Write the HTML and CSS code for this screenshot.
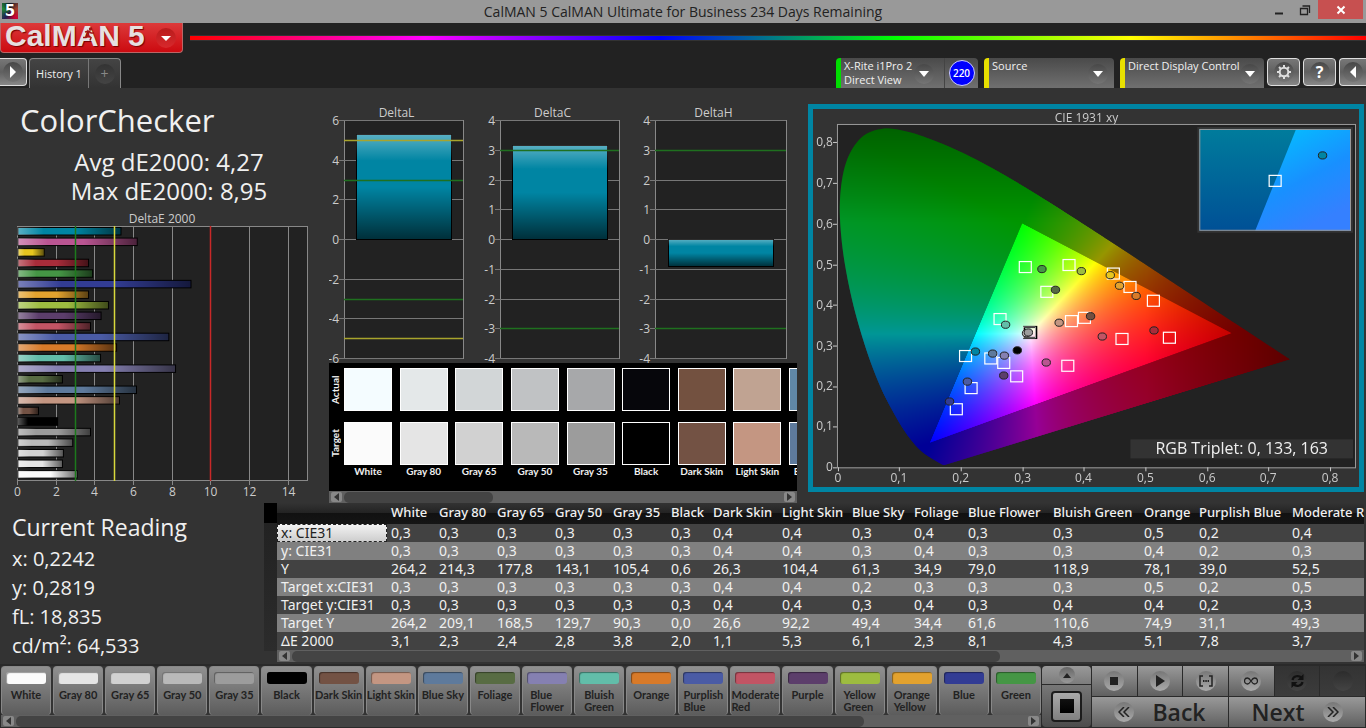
FILE: index.html
```html
<!DOCTYPE html>
<html lang="en">
<head>
    <meta charset="UTF-8">
    <meta name="viewport" content="width=device-width, initial-scale=1.0">
    <title>CalMAN 5 CalMAN Ultimate for Business</title>
    <link rel="stylesheet" href="styles.css">
</head>
<body>
    <div class="titlebar">
        <span class="app-icon">5</span>
        <span class="window-title">CalMAN 5 CalMAN Ultimate for Business 234 Days Remaining</span>
        <div class="window-buttons">
            <button class="win-btn" aria-label="Minimize"><svg width="12" height="14"><path d="M2 10.5h8" stroke="#222" stroke-width="2"/></svg></button>
            <button class="win-btn" aria-label="Restore"><svg width="12" height="14"><path d="M1.5 5.500h7v6h-7zM3.500 3h7v7" fill="none" stroke="#222" stroke-width="1.300"/></svg></button>
            <button class="win-btn close" aria-label="Close"><svg width="10" height="10"><path d="M1.500 1.500l7 7M8.500 1.500l-7 7" stroke="#fff" stroke-width="2"/></svg></button>
        </div>
    </div>

    <header>
        <div class="brand-row">
            <button class="brand" aria-label="CalMAN 5 menu">
                <span class="brand-name">CalMAN</span>
                <span class="brand-name">5</span>
                <svg class="runner" width="12" height="14" viewBox="0 0 12 14"><circle cx="7.500" cy="2" r="1.700" fill="#a01515"/><path d="M2 5l4-1 2 2 3 0M6 4.500l-1 4 3 2-1 3M5 8.500l-2 2-3 0" fill="none" stroke="#a01515" stroke-width="1.500"/></svg>
                <span class="knob red"><svg width="10" height="5"><path d="M0 0h10l-5 5z" fill="#fff"/></svg></span>
            </button>
            <div class="spectrum"></div>
        </div>
        <div class="tab-row">
            <button class="square-btn first" aria-label="Expand"><span class="knob"><svg width="6" height="12"><path d="M0 0l6 6-6 6z" fill="#fff"/></svg></span></button>
            <div class="tabs">
                <button class="tab">History 1</button>
                <button class="tab add" aria-label="Add tab"><span class="knob dim">+</span></button>
            </div>
            <div class="devices">
                <button class="device meter">
                    <span class="device-name">X-Rite i1Pro 2<br>Direct View</span>
                    <span class="knob"><svg width="10" height="6"><path d="M0 0h10l-5 6z" fill="#fff"/></svg></span>
                </button>
                <button class="count"><span class="badge">220</span></button>
                <button class="device source">
                    <span class="device-name">Source</span>
                    <span class="knob"><svg width="10" height="6"><path d="M0 0h10l-5 6z" fill="#fff"/></svg></span>
                </button>
                <button class="device display">
                    <span class="device-name">Direct Display Control</span>
                    <span class="knob"><svg width="10" height="6"><path d="M0 0h10l-5 6z" fill="#fff"/></svg></span>
                </button>
                <button class="square-btn" aria-label="Settings"><span class="knob"><svg width="16" height="16" viewBox="0 0 16 16"><circle cx="8" cy="8" r="4.300" fill="none" stroke="#ddd" stroke-width="2"/><path d="M8 1v2.500M8 12.500V15M1 8h2.500M12.500 8H15M3 3l1.800 1.800M11.200 11.200L13 13M3 13l1.800-1.800M11.200 4.800L13 3" stroke="#ddd" stroke-width="2"/></svg></span></button>
                <button class="square-btn" aria-label="Help"><span class="knob help">?</span></button>
                <button class="square-btn last" aria-label="Collapse"><span class="knob"><svg width="6" height="12"><path d="M6 0L0 6l6 6z" fill="#fff"/></svg></span></button>
            </div>
        </div>
    </header>

    <main>
        <div class="charts">
            <section class="summary">
                <h1>ColorChecker</h1>
                <p class="stats">Avg dE2000: 4,27<br>Max dE2000: 8,95</p>
                <svg id="deltaE" class="chart" viewBox="0 0 329 290"></svg>
            </section>

            <section class="deltas">
                <svg id="deltaLCH" class="chart" viewBox="0 0 468 275"></svg>
                <div class="compare">
                    <div class="compare-labels"><span>Actual</span><span>Target</span></div>
                    <div class="compare-track" id="compare"></div>
                </div>
                <div class="scroll">
                    <button class="scroll-btn" aria-label="Scroll left"><svg width="5" height="8"><path d="M5 0v8L0 4z"/></svg></button>
                    <div class="scroll-track"><div class="scroll-thumb" style="width: 34%"></div></div>
                    <button class="scroll-btn" aria-label="Scroll right"><svg width="5" height="8"><path d="M0 0v8l5-4z"/></svg></button>
                </div>
            </section>

            <section class="cie">
                <canvas id="gamut" width="1094" height="758"></canvas>
                <svg id="ciePlot" viewBox="0 0 547 379"></svg>
            </section>
        </div>

        <div class="readings">
            <section class="current">
                <h2>Current Reading</h2>
                <p>x: 0,2242<br>y: 0,2819<br>fL: 18,835<br>cd/m²: 64,533</p>
            </section>
            <section class="data">
                <div class="row-marks"></div>
                <div class="data-body">
                    <div class="table-wrap"><table id="data"></table></div>
                    <div class="scroll">
                        <button class="scroll-btn" aria-label="Scroll left"><svg width="5" height="8"><path d="M5 0v8L0 4z"/></svg></button>
                        <div class="scroll-track"><div class="scroll-thumb" style="width: 67%"></div></div>
                        <button class="scroll-btn" aria-label="Scroll right"><svg width="5" height="8"><path d="M0 0v8l5-4z"/></svg></button>
                    </div>
                </div>
            </section>
        </div>
    </main>

    <footer>
        <div class="patches">
            <div class="patch-row" id="patches"></div>
            <div class="scroll">
                <button class="scroll-btn" aria-label="Scroll left"><svg width="5" height="8"><path d="M5 0v8L0 4z"/></svg></button>
                <div class="scroll-track"><div class="scroll-thumb" style="width: 84%"></div></div>
                <button class="scroll-btn" aria-label="Scroll right"><svg width="5" height="8"><path d="M0 0v8l5-4z"/></svg></button>
            </div>
        </div>
        <div class="pattern">
            <button class="pattern-up" aria-label="Expand patterns"><span class="knob small"><svg width="8" height="5"><path d="M0 5h8L4 0z" fill="#222"/></svg></span></button>
            <button class="pattern-view" aria-label="Pattern window"><span class="pattern-box"></span></button>
        </div>
        <div class="transport">
            <div class="play-row">
                <button aria-label="Stop"><span class="knob light"><svg width="8" height="8"><path d="M0 0h8v8H0z" fill="#222"/></svg></span></button>
                <button aria-label="Play"><span class="knob light"><svg width="9" height="12"><path d="M0 0l9 6-9 6z" fill="#222"/></svg></span></button>
                <button aria-label="Read series"><span class="knob light"><svg width="14" height="12"><path d="M4 1H1v10h3M10 1h3v10h-3" fill="none" stroke="#222" stroke-width="1.500"/><path d="M4 6h6" stroke="#222" stroke-width="2" stroke-dasharray="1.500 .8"/></svg></span></button>
                <button aria-label="Read continuous"><span class="knob light"><svg width="14" height="8"><path d="M7 4C5 1 4 1 3.500 1a3 3 0 0 0 0 6C4 7 5 7 7 4s3-3 3.500-3a3 3 0 0 1 0 6C10 7 9 7 7 4" fill="none" stroke="#222" stroke-width="1.300"/></svg></span></button>
                <button class="off" aria-label="Repeat"><span class="knob off"><svg width="13" height="14" viewBox="0 0 13 14"><path d="M1.500 6a5 4.500 0 0 1 9-2M11.500 8a5 4.500 0 0 1-9 2" fill="none" stroke="#111" stroke-width="2.200"/><path d="M12.500 0v6h-6zM.5 14V8h6z" fill="#111"/></svg></span></button>
                <button class="off" aria-label="Record"><span class="knob off"></span></button>
            </div>
            <div class="nav-row">
                <button><span class="knob light"><svg width="12" height="10"><path d="M6 0L1 5l5 5M11 0L6 5l5 5" fill="none" stroke="#222" stroke-width="1.500"/></svg></span>Back</button>
                <button>Next<span class="knob light"><svg width="12" height="10"><path d="M1 0l5 5-5 5M6 0l5 5-5 5" fill="none" stroke="#222" stroke-width="1.500"/></svg></span></button>
            </div>
        </div>
    </footer>

    <script src="app.js"></script>
</body>
</html>
```

FILE: styles.css
```css
* {
    box-sizing: border-box;
}
body {
    margin: 0;
    background: #222;
    color: #f0f0f0;
    font-family: "Open Sans", "Noto Sans", sans-serif;
    font-size: 12px;
}
button {
    font: inherit;
    color: inherit;
    border: none;
    padding: 0;
    margin: 0;
    background: none;
    cursor: pointer;
}
h1, h2, p {
    margin: 0;
    font-weight: 400;
}
svg, canvas {
    display: block;
}

/* title bar */
.titlebar {
    display: grid;
    grid-template-columns: 1fr auto 1fr;
    height: 23px;
    background: #999;
    color: #222;
}
.app-icon {
    width: 16px;
    height: 16px;
    margin: 3px 2px;
    background: conic-gradient(#123, #a0402a, #c03, #225, #283, #123);
    color: #fff;
    font: bold 15px/16px "DejaVu Sans", sans-serif;
    text-align: center;
    text-shadow: 0 0 2px #000;
}
.window-title {
    font-size: 14px;
    line-height: 23px;
}
.window-buttons {
    display: flex;
    justify-content: flex-end;
    align-items: flex-start;
    padding-right: 3px;
}
.win-btn {
    display: flex;
    align-items: center;
    justify-content: center;
    width: 26px;
    height: 19px;
}
.win-btn.close {
    width: 45px;
    background: #c75050;
}

/* header */
.brand-row {
    display: flex;
    gap: 7px;
    height: 35px;
}
.brand {
    position: relative;
    display: flex;
    gap: 8px;
    width: 183px;
    height: 30px;
    padding: 0 6px 0 4px;
    border: 1px solid #b66;
    border-top: none;
    border-radius: 0 0 4px 4px;
    background: linear-gradient(#dc3a3a, #cc0a10);
}
.brand-name {
    font: bold 30px/26px "Liberation Sans", Arial, sans-serif;
    color: #e6e0e0;
    text-shadow: 1px 1px 1px #700;
}
.runner {
    position: absolute;
    left: 82px;
    top: 4px;
}
.brand .knob {
    margin: 5px 0 0 auto;
}
.spectrum {
    flex: 1;
    height: 6px;
    margin-top: 12px;
    border: solid #333;
    border-width: 1px 0;
    background: linear-gradient(90deg, #f00, #f0f 20%, #00f 40%, #0f0 60%, #ff0 80%, #f00);
}
.knob {
    display: flex;
    align-items: center;
    justify-content: center;
    flex: none;
    width: 20px;
    height: 20px;
    border-radius: 50%;
    background: linear-gradient(#484848, #757575);
}
.knob.red {
    background: linear-gradient(#b81c1c, #d8282c);
}
.knob.dim {
    background: linear-gradient(#333, #444);
    color: #888;
    font-size: 14px;
}
.knob.help {
    font-size: 16px;
    font-weight: 700;
    color: #fff;
}
.knob.light {
    background: linear-gradient(#777, #aaa);
}
.knob.off {
    background: linear-gradient(#2c2c2c, #444);
}
.knob.small {
    width: 16px;
    height: 16px;
    background: linear-gradient(#666, #999);
}
.tab-row {
    display: flex;
    height: 30px;
    font-size: 11px;
}
.square-btn {
    display: flex;
    align-items: center;
    justify-content: center;
    width: 33px;
    height: 28px;
    border: 1px solid #ddd;
    border-radius: 4px;
    background: linear-gradient(#777, #606060 50%, #888);
}
.square-btn.first {
    width: 27px;
    border-left: none;
    border-radius: 0 4px 4px 0;
}
.square-btn.last {
    width: 27px;
    border-right: none;
    border-radius: 4px 0 0 4px;
}
.tabs {
    display: flex;
    margin-left: 2px;
    border: 1px solid #888;
    border-bottom: none;
    border-radius: 4px 4px 0 0;
    background: linear-gradient(#444, #333);
}
.tab {
    width: 58px;
}
.tab.add {
    display: flex;
    align-items: center;
    justify-content: center;
    width: 32px;
    border-left: 1px solid #777;
}
.devices {
    display: flex;
    gap: 3px;
    margin-left: auto;
}
.device {
    display: flex;
    justify-content: space-between;
    width: 108px;
    padding: 1px 6px 0 3px;
    border-left: 5px solid #0d0;
    border-radius: 4px 0 0 0;
    background: linear-gradient(#4a4a4a, #707070);
    text-align: left;
}
.device.meter {
    padding-right: 10px;
}
.device .knob {
    margin-top: 5px;
}
.device-name {
    line-height: 14px;
    white-space: nowrap;
}
.count {
    width: 34px;
    margin-left: -3px;
    margin-right: 3px;
    border-left: 1px solid #444;
    border-radius: 0 4px 0 0;
    background: linear-gradient(#4a4a4a, #707070);
}
.badge {
    display: block;
    width: 26px;
    height: 26px;
    margin: 0 auto;
    border: 1px solid #ccf;
    border-radius: 50%;
    background: #00f;
    color: #fff;
    font-size: 10px;
    font-weight: 600;
    line-height: 24px;
}
.device.source {
    width: 130px;
    margin-right: 3px;
    border-color: #e8e000;
    border-radius: 4px 4px 0 0;
}
.device.display {
    width: 144px;
    border-color: #e8e000;
    border-radius: 4px 4px 0 0;
}

/* charts */
main {
    background: #333;
}
.charts {
    display: grid;
    grid-template-columns: 329fr 479fr 556fr;
    padding-right: 2px;
}
.deltas {
    min-width: 0;
    padding-right: 11px;
}
.summary h1 {
    padding: 12px 0 0 20px;
    font-size: 31px;
    line-height: 40px;
}
.stats {
    margin: 7px 0;
    padding-left: 9px;
    font-size: 24px;
    line-height: 29px;
    text-align: center;
}
.chart {
    width: 100%;
}
.chart text, .cie text {
    fill: #ccc;
    font-size: 12px;
}
.compare {
    display: flex;
    height: 128px;
    overflow: hidden;
    background: #000;
    font: bold 10px/13px Lato, sans-serif;
}
.compare-labels {
    display: flex;
    flex-direction: column;
    gap: 11px;
    width: 15px;
    flex: none;
    padding-top: 5px;
}
.compare-labels span {
    height: 43px;
    writing-mode: vertical-rl;
    transform: rotate(180deg);
    text-align: center;
}
.compare-track {
    display: grid;
    grid-auto-flow: column;
    grid-auto-columns: calc((100% - 8px) / 8);
    flex: 1;
    min-width: 0;
    padding-top: 5px;
}
.compare-item {
    display: flex;
    flex-direction: column;
    align-items: center;
    width: 48px;
    white-space: nowrap;
}
.compare-color {
    width: 48px;
    height: 43px;
    margin-bottom: 11px;
    border: 1px solid #fff;
}
.compare-color.target {
    margin-bottom: 0;
}
.scroll {
    display: flex;
    align-items: center;
    gap: 2px;
    height: 12px;
    padding: 0 2px;
    background: #606060;
}
.scroll-btn {
    display: flex;
    align-items: center;
    justify-content: center;
    width: 11px;
    height: 10px;
    border-radius: 2px;
    background: #888;
    fill: #333;
}
.scroll-track {
    flex: 1;
}
.scroll-thumb {
    height: 11px;
    border-radius: 5px;
    background: #444;
}
.cie {
    display: grid;
    align-self: start;
    margin-top: 16px;
    border: 5px solid #0085a3;
}
.cie canvas, .cie svg {
    grid-area: 1 / 1;
    width: 100%;
}
.cie .triplet {
    fill: #f0f0f0;
    font-size: 16px;
}

/* readings and table */
.readings {
    display: flex;
    height: 161px;
}
.current {
    width: 264px;
    flex: none;
    padding: 8px 12px 0;
}
.current h2 {
    font-size: 23px;
    font-weight: 500;
    line-height: 33px;
}
.current p {
    font-size: 20px;
    line-height: 29px;
}
.data {
    display: flex;
    flex: 1;
    min-width: 0;
    padding-right: 2px;
}
.row-marks {
    width: 13px;
    height: 148px;
    flex: none;
    background: linear-gradient(#000 20px, #222 20px, #2c2c2c);
}
.data-body {
    flex: 1;
    min-width: 0;
}
.table-wrap {
    overflow: hidden;
}
table {
    width: 1110px;
    table-layout: fixed;
    border-collapse: collapse;
    font-family: "Noto Sans", "Open Sans", sans-serif;
    font-size: 14px;
}
th, td {
    height: 18px;
    padding: 0 0 0 4px;
    font-weight: 400;
    line-height: 18px;
    text-align: left;
    white-space: nowrap;
}
thead th {
    height: 21px;
    background: linear-gradient(#333, #222 50%, #111 50%, #151515);
    font-size: 13px;
    font-weight: 500;
    vertical-align: top;
}
tbody tr {
    background: #424242;
}
tbody tr:nth-child(even) {
    background: #808080;
}
th.selected {
    background: linear-gradient(#f4f4f4, #ccc);
    color: #222;
    outline: 1px dashed #222;
    outline-offset: -1px;
}

/* bottom bar */
footer {
    display: flex;
    height: 64px;
    padding: 2px 1px 1px;
    background: #2a2a2a;
}
.patches {
    flex: 1;
    min-width: 0;
    margin-right: 1px;
}
.patch-row {
    display: grid;
    grid-template-columns: repeat(20, 1fr);
    gap: 2px;
    height: 49px;
    background: #333;
}
.patch {
    display: flex;
    flex-direction: column;
    align-items: center;
    min-width: 0;
    padding-top: 5px;
    border: 1px solid #888;
    border-bottom: none;
    border-radius: 4px;
    background: linear-gradient(#909090, #5c5c5c);
    color: #222;
    font: bold 11px/12px Lato, sans-serif;
    text-align: left;
}
.patch-color {
    width: 40px;
    height: 12px;
    flex: none;
    margin-bottom: 5px;
    border-radius: 3px;
    box-shadow: inset 1px 1px 1px rgba(0, 0, 0, 0.4);
}
.pattern {
    display: flex;
    flex-direction: column;
    gap: 1px;
    width: 49px;
    margin-right: 1px;
}
.pattern-up {
    display: flex;
    justify-content: center;
    height: 18px;
    padding-top: 1px;
    border-radius: 4px 4px 0 0;
    background: linear-gradient(#999, #7c7c7c);
}
.pattern-view {
    display: flex;
    align-items: center;
    justify-content: center;
    flex: 1;
    border-radius: 0 0 4px 4px;
    background: linear-gradient(#777, #4c4c4c);
}
.pattern-box {
    width: 31px;
    height: 31px;
    border: 2px solid #1c1c1c;
    border-radius: 4px;
    background: linear-gradient(#111, #000) center / 14px 14px no-repeat, linear-gradient(#aaa, #808080);
}
.transport {
    display: flex;
    flex-direction: column;
    gap: 1px;
    width: 273px;
}
.play-row, .nav-row {
    display: flex;
    gap: 1px;
    height: 30px;
}
.play-row button, .nav-row button {
    display: flex;
    align-items: center;
    justify-content: center;
    flex: 1;
    background: linear-gradient(#999, #606060);
    color: #222;
}
.play-row button.off {
    background: linear-gradient(#333, #3c3c3c);
}
.nav-row button {
    gap: 18px;
    font-size: 23px;
    font-weight: 600;
    line-height: 30px;
}
```

FILE: app.js
```js
const colors = [
    { name: 'White', color: '#fbfbfb', actual: '#f4fcff', de: 3.07 },
    { name: 'Gray 80', color: '#e5e5e5', actual: '#e4e8e9', de: 2.3 },
    { name: 'Gray 65', color: '#d1d1d1', actual: '#d2d6d7', de: 2.35 },
    { name: 'Gray 50', color: '#b9b9b9', actual: '#c0c2c4', de: 2.83 },
    { name: 'Gray 35', color: '#9c9c9c', actual: '#a7a8aa', de: 3.75 },
    { name: 'Black', color: '#000000', actual: '#06060b', de: 2.05 },
    { name: 'Dark Skin', color: '#735244', actual: '#735140', de: 1.06 },
    { name: 'Light Skin', color: '#c49682', actual: '#c0a392', de: 5.25 },
    { name: 'Blue Sky', color: '#5e7a9c', actual: '#6088a8', de: 6.13 },
    { name: 'Foliage', color: '#586c43', de: 2.3 },
    { name: 'Blue Flower', color: '#8580b1', de: 8.15 },
    { name: 'Bluish Green', color: '#62bda9', de: 4.27 },
    { name: 'Orange', color: '#d87a29', de: 5.1 },
    { name: 'Purplish Blue', color: '#4a5ba5', de: 7.8 },
    { name: 'Moderate Red', color: '#c25464', de: 3.75 },
    { name: 'Purple', color: '#5c3e6b', de: 4.3 },
    { name: 'Yellow Green', color: '#9dbc40', de: 4.68 },
    { name: 'Orange Yellow', color: '#e3a22e', de: 3.65 },
    { name: 'Blue', color: '#323c94', de: 8.95 },
    { name: 'Green', color: '#459645', de: 3.86 },
    { name: 'Red', color: '#a92c3a', de: 3.65 },
    { name: 'Yellow', color: '#e7c61f', de: 1.36 },
    { name: 'Magenta', color: '#ba5592', de: 6.17 },
    { name: 'Cyan', color: '#0085a3', de: 5.33 }
];

const line = (x1, y1, x2, y2, stroke, w = 1) =>
    `<path d="M${x1} ${y1}L${x2} ${y2}" stroke="${stroke}" stroke-width="${w}"/>`;
const label = (x, y, text, anchor = 'middle', cls = '') =>
    `<text x="${x}" y="${y}" text-anchor="${anchor}" class="${cls}">${text}</text>`;

// DeltaE 2000 bars, last patch on top
function drawDeltaE() {
    const left = 17, top = 14, bottom = 269, unit = 19.33;
    let out = `<defs><linearGradient id="sheenX"><stop offset="0" stop-color="#fff" stop-opacity=".35"/><stop offset=".25" stop-color="#fff" stop-opacity="0"/><stop offset=".55" stop-opacity="0"/><stop offset="1" stop-opacity=".6"/></linearGradient></defs>`;
    out += label(162, 11, 'DeltaE 2000');
    out += `<rect x="${left}.5" y="${top}.5" width="290" height="254" fill="#222" stroke="#888"/>`;
    for (let v = 0; v <= 14; v += 2) {
        const x = Math.round(left + v * unit) + 0.5;
        out += line(x, top, x, bottom + 4, '#888');
        out += label(x, 284, v);
    }
    colors.slice().reverse().forEach((c, i) => {
        const y = top + 1.5 + i * 10.57;
        const w = c.de * unit;
        out += `<rect x="${left + 1}" y="${y}" width="${w}" height="7.5" fill="${c.color}" stroke="#000"/>`;
        out += `<rect x="${left + 1}" y="${y}" width="${w}" height="7.5" fill="url(#sheenX)"/>`;
    });
    out += line(75.5, top, 75.5, bottom, '#1c7a1c', 1.5);
    out += line(114.5, top, 114.5, bottom, '#d8d83c', 1.5);
    out += line(210.5, top, 210.5, bottom, '#c82828', 1.5);
    document.getElementById('deltaE').innerHTML = out;
}

function drawDelta(title, left, width, max, step, value, limits) {
    const top = 32, height = 238;
    const y = v => Math.round(top + (max - v) / (2 * max) * height) + 0.5;
    let out = label(left + width / 2 - 7, 29, title);
    out += `<rect x="${left}.5" y="${top}.5" width="${width}" height="${height}" fill="#222" stroke="#888"/>`;
    for (let v = -max; v <= max; v += step) {
        out += line(left - 5, y(v), left + width, y(v), '#777');
        out += label(left - 5, y(v) + 4, v, 'end');
    }
    const barTop = y(Math.max(value, 0));
    const barHeight = y(Math.min(value, 0)) - barTop;
    const barX = left + Math.round(width * 0.1) + 0.5;
    const attrs = `x="${barX}" y="${barTop}" width="${Math.round(width * 0.8)}" height="${barHeight}"`;
    out += `<rect ${attrs} fill="#0085a3" stroke="#000"/><rect ${attrs} fill="url(#sheenY)"/>`;
    limits.forEach(([v, c]) => {
        out += line(left, y(v), left + width, y(v), c, 1.5);
    });
    return out;
}

function drawDeltas() {
    const green = '#1f701f', yellow = '#a8a42c';
    let out = `<defs><linearGradient id="sheenY" x2="0" y2="1"><stop offset="0" stop-color="#fff" stop-opacity=".35"/><stop offset=".25" stop-color="#fff" stop-opacity="0"/><stop offset=".5" stop-opacity="0"/><stop offset="1" stop-opacity=".65"/></linearGradient></defs>`;
    out += drawDelta('DeltaL', 15, 119, 6, 2, 5.3, [[5, yellow], [3, green], [-3, green], [-5, yellow]]);
    out += drawDelta('DeltaC', 171, 119, 4, 1, 3.17, [[3, green], [-3, green]]);
    out += drawDelta('DeltaH', 326, 131, 4, 1, -0.9, [[3, green], [-3, green]]);
    document.getElementById('deltaLCH').innerHTML = out;
}

// CIE 1931 chromaticity diagram
const cx = x => 24.5 + 617 * x;
const cy = y => 359 - 407 * y;
const locus = [
    [.1741, .005], [.1733, .0048], [.1714, .0051], [.1689, .0069], [.1644, .0109], [.1566, .0177],
    [.144, .0297], [.1355, .0399], [.1241, .0578], [.1096, .0868], [.0913, .1327], [.0687, .2007],
    [.0454, .295], [.0235, .4127], [.0082, .5384], [.0039, .6548], [.0139, .7502], [.0389, .812],
    [.0743, .8338], [.1142, .8262], [.1547, .8059], [.1929, .7816], [.2296, .7543], [.2658, .7243],
    [.3016, .6923], [.3373, .6589], [.3731, .6245], [.4087, .5896], [.4441, .5547], [.4788, .5202],
    [.5125, .4866], [.5448, .4544], [.5752, .4242], [.6029, .3965], [.627, .3725], [.6658, .334],
    [.6915, .3083], [.7079, .292], [.7347, .2653]
];
const gamut = [[.64, .33], [.3, .6], [.15, .06]];

// Catmull-Rom spline through the locus samples
function smooth(points) {
    const out = [];
    for (let i = 0; i < points.length - 1; i++) {
        const p0 = points[Math.max(i - 1, 0)], p1 = points[i];
        const p2 = points[i + 1], p3 = points[Math.min(i + 2, points.length - 1)];
        for (let t = 0; t < 1; t += 0.125) {
            out.push([0, 1].map(k => 0.5 * (2 * p1[k] + (p2[k] - p0[k]) * t
                + (2 * p0[k] - 5 * p1[k] + 4 * p2[k] - p3[k]) * t * t
                + (3 * p1[k] - p0[k] - 3 * p2[k] + p3[k]) * t * t * t)));
        }
    }
    out.push(points[points.length - 1]);
    return out;
}

function fieldImage(w, h, level) {
    const c = document.createElement('canvas');
    c.width = w;
    c.height = h;
    const g = c.getContext('2d');
    const img = g.createImageData(w, h);
    for (let j = 0; j < h; j++) {
        for (let i = 0; i < w; i++) {
            const x = (i / 2 - 24.5) / 617;
            const y = (359 - j / 2) / 407;
            const z = 1 - x - y;
            const r = Math.max(0, 3.2406 * x - 1.5372 * y - 0.4986 * z);
            const gr = Math.max(0, -0.9689 * x + 1.8758 * y + 0.0415 * z);
            const b = Math.max(0, 0.0557 * x - 0.204 * y + 1.057 * z);
            // fade towards the far red and far green ends
            const fade = 1 - 1.65 * Math.max(0, x - 0.5) - 1.5 * Math.max(0, y - 0.6);
            const k = 255 * level * fade / Math.max(r, gr, b, 0.001);
            const p = (j * w + i) * 4;
            img.data[p] = r * k;
            img.data[p + 1] = gr * k;
            img.data[p + 2] = b * k;
            img.data[p + 3] = 255;
        }
    }
    g.putImageData(img, 0, 0);
    return c;
}

function drawGamut() {
    const canvas = document.getElementById('gamut');
    const ctx = canvas.getContext('2d');
    ctx.fillStyle = '#333';
    ctx.fillRect(0, 0, canvas.width, canvas.height);
    ctx.fillStyle = '#222';
    ctx.fillRect(49, 32, 1038, 686);
    [[smooth(locus), 0.59], [gamut, 1]].forEach(([shape, level]) => {
        ctx.save();
        ctx.beginPath();
        shape.forEach(([x, y]) => ctx.lineTo(cx(x) * 2, cy(y) * 2));
        ctx.closePath();
        ctx.clip();
        ctx.drawImage(fieldImage(canvas.width, canvas.height, level), 0, 0);
        ctx.restore();
    });
}

const targets = [
    [.305, .493], [.376, .498], [.340, .432], [.448, .477], [.475, .444], [.513, .410],
    [.264, .365], [.380, .360], [.401, .368], [.462, .316], [.539, .319], [.208, .274],
    [.249, .268], [.270, .257], [.291, .224], [.217, .195], [.193, .143], [.374, .250]
];
const measured = [
    [.332, .488, '#459645'], [.396, .483, '#9dbc40'], [.354, .437, '#566a43'], [.443, .473, '#e7c61f'],
    [.458, .447, '#e3a22e'], [.485, .422, '#d87a29'], [.273, .351, '#62bda9'], [.360, .356, '#c49682'],
    [.411, .372, '#734f40'], [.430, .322, '#c25464'], [.514, .337, '#a92c3a'], [.224, .285, '#0085a3'],
    [.252, .280, '#5e7a9c'], [.271, .275, '#8580b1'], [.292, .288, '#000'], [.270, .226, '#5c3e6b'],
    [.211, .211, '#4a5ba5'], [.182, .162, '#323c94'], [.339, .258, '#ba5592'],
    [.307, .330, '#b9b9b9'], [.310, .332, '#9c9c9c']
];
const square = (x, y, c, w = 1.2) =>
    `<rect x="${x - 6}" y="${y - 5.5}" width="12" height="11" fill="none" stroke="${c}" stroke-width="${w}"/>`;
const dot = (x, y, c) =>
    `<ellipse cx="${x}" cy="${y}" rx="4.2" ry="3.6" fill="${c}" stroke="#222"/>`;

function drawCie() {
    let out = label(274, 13, 'CIE 1931 xy');
    out += '<rect x="24.5" y="15.500" width="519" height="344" fill="none" stroke="#999"/>';
    for (let i = 0; i <= 8; i++) {
        const text = i ? '0,' + i : '0';
        const x = Math.round(cx(i / 10)), y = Math.round(cy(i / 10));
        out += line(x + 0.5, 359, x + 0.5, 363, '#ccc') + label(x, 374, text);
        out += line(20, y + 0.5, 24, y + 0.5, '#ccc') + label(20, y + 4, text, 'end');
    }
    targets.forEach(([x, y]) => out += square(cx(x), cy(y), '#fff'));
    out += square(cx(.313), cy(.332), '#000', 2.2) + square(cx(.312), cy(.332), '#fff', .6);
    measured.forEach(([x, y, c]) => out += dot(cx(x), cy(y), c));

    // magnified view of the current reading
    out += `<defs><linearGradient id="inDark" x2="0" y2="1"><stop stop-color="#007c9c"/><stop offset="1" stop-color="#005096"/></linearGradient>
        <linearGradient id="inBright" x2=".5" y2="1"><stop stop-color="#00c8ff"/><stop offset=".6" stop-color="#1890ff"/><stop offset="1" stop-color="#3580ff"/></linearGradient></defs>
        <rect x="385" y="18" width="156" height="106" fill="#333"/>
        <rect x="387" y="20" width="152" height="102" fill="url(#inDark)"/>
        <path d="M484 20H539V122H443Z" fill="url(#inBright)"/>
        <rect x="387.500" y="20.500" width="151" height="101" fill="none" stroke="#999"/>`;
    out += square(463, 72, '#fff') + dot(510.5, 46.5, '#0085a3');
    out += '<rect x="318" y="331" width="223" height="19" fill="#333"/>';
    out += label(429.5, 346, 'RGB Triplet: 0, 133, 163', 'middle', 'triplet');
    document.getElementById('ciePlot').innerHTML = out;
}

function fillSwatches() {
    document.getElementById('compare').innerHTML = colors.slice(0, 9).map(c => `
        <div class="compare-item">
            <div class="compare-color" style="background: ${c.actual}"></div>
            <div class="compare-color target" style="background: ${c.color}"></div>
            <span>${c.name}</span>
        </div>`).join('');
    document.getElementById('patches').innerHTML = colors.slice(0, 20).map(c => {
        const name = / (Skin|Sky|\d+)$/.test(c.name) ? c.name.replace(' ', '&nbsp;') : c.name.replace(' ', '<br>');
        return `<button class="patch"><span class="patch-color" style="background: ${c.color}"></span><span>${name}</span></button>`;
    }).join('');
}

function fillTable() {
    const widths = [110, 48, 58, 58, 58, 58, 42, 69, 70, 62, 54, 85, 91, 55, 93, 99];
    const rows = [
        ['x: CIE31', '0,3 0,3 0,3 0,3 0,3 0,3 0,4 0,4 0,3 0,4 0,3 0,3 0,5 0,2 0,4'],
        ['y: CIE31', '0,3 0,3 0,3 0,3 0,3 0,3 0,4 0,4 0,3 0,4 0,3 0,3 0,4 0,2 0,3'],
        ['Y', '264,2 214,3 177,8 143,1 105,4 0,6 26,3 104,4 61,3 34,9 79,0 118,9 78,1 39,0 52,5'],
        ['Target x:CIE31', '0,3 0,3 0,3 0,3 0,3 0,3 0,4 0,4 0,2 0,3 0,3 0,3 0,5 0,2 0,5'],
        ['Target y:CIE31', '0,3 0,3 0,3 0,3 0,3 0,3 0,4 0,4 0,3 0,4 0,3 0,4 0,4 0,2 0,3'],
        ['Target Y', '264,2 209,1 168,5 129,7 90,3 0,0 26,6 92,2 49,4 34,4 61,6 110,6 74,9 31,1 49,3'],
        ['ΔE 2000', '3,1 2,3 2,4 2,8 3,8 2,0 1,1 5,3 6,1 2,3 8,1 4,3 5,1 7,8 3,7']
    ];
    let out = '<colgroup>' + widths.map(w => `<col style="width: ${w}px">`).join('') + '</colgroup>';
    out += '<thead><tr><th></th>' + colors.slice(0, 15).map(c => `<th>${c.name}</th>`).join('') + '</tr></thead><tbody>';
    rows.forEach(([name, values], i) => {
        out += `<tr><th${i ? '' : ' class="selected"'}>${name}</th>`;
        out += values.split(' ').map(v => `<td>${v}</td>`).join('') + '</tr>';
    });
    document.getElementById('data').innerHTML = out + '</tbody>';
}

drawDeltaE();
drawDeltas();
drawGamut();
drawCie();
fillSwatches();
fillTable();
```
